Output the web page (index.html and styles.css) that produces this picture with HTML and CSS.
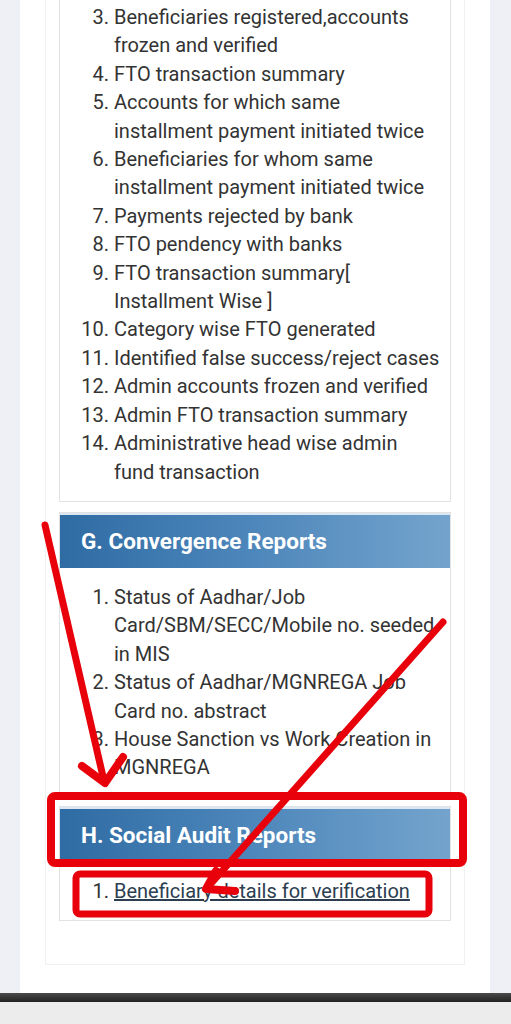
FILE: index.html
```html
<!DOCTYPE html>
<html>
	<head>
		<meta charset="utf-8">
		<meta name="viewport" content="width=device-width, initial-scale=1.0">
		<title>MGNREGA Reports</title>
		<link rel="stylesheet" href="styles.css">
	</head>
	<body>
		<div class="screen">
			<div class="card">
				<div class="panel panel-top">
					<ol class="report-list" start="3">
						<li>Beneficiaries registered,accounts frozen and verified</li>
						<li>FTO transaction summary</li>
						<li>Accounts for which same installment payment initiated twice</li>
						<li>Beneficiaries for whom same installment payment initiated twice</li>
						<li>Payments rejected by bank</li>
						<li>FTO pendency with banks</li>
						<li>FTO transaction summary[ Installment Wise ]</li>
						<li>Category wise FTO generated</li>
						<li>Identified false success/reject cases</li>
						<li>Admin accounts frozen and verified</li>
						<li>Admin FTO transaction summary</li>
						<li>Administrative head wise admin fund transaction</li>
					</ol>
				</div>

				<div class="panel">
					<div class="panel-head">G. Convergence Reports</div>
					<ol class="report-list">
						<li>Status of Aadhar/Job Card/SBM/SECC/Mobile no. seeded in MIS</li>
						<li>Status of Aadhar/MGNREGA Job Card no. abstract</li>
						<li>House Sanction vs Work Creation in MGNREGA</li>
					</ol>
				</div>

				<div class="panel">
					<div class="panel-head">H. Social Audit Reports</div>
					<ol class="report-list">
						<li><a href="#">Beneficiary details for verification</a></li>
					</ol>
				</div>
			</div>
		</div>
		<div class="bottom-bar"></div>
		<div class="bottom-fill"></div>

		<!-- 红色标注 -->
		<svg class="marks" width="511" height="1024" viewBox="0 0 511 1024">
			<g fill="none" stroke="#e8000a" stroke-linecap="round" stroke-linejoin="round">
				<line x1="45" y1="525" x2="104" y2="781" stroke-width="7" />
				<polyline points="82,766 105,783 123,757" stroke-width="8" />
				<line x1="443" y1="622" x2="207" y2="888" stroke-width="7" />
				<polyline points="216,871 206,889 235,891" stroke-width="8" />
				<rect x="51" y="796" width="412" height="67" rx="4" stroke-width="8" />
				<rect x="76" y="874" width="353" height="40" rx="4" stroke-width="7" />
			</g>
		</svg>
	</body>
</html>
```

FILE: styles.css
```css
* {
	padding: 0;
	margin: 0;
	box-sizing: border-box;
}

body {
	position: relative;
	width: 511px;
	height: 1024px;
	overflow: hidden;
	background-color: #eff0f6;
	font-family: Roboto, "Liberation Sans", Arial, sans-serif;
	color: #333;
}

.screen {
	margin: 0 21px 0 20px;
	height: 993px;
	overflow: hidden;
	background-color: #fff;
}

.card {
	margin-left: 25px;
	width: 420px;
	padding: 0 13px 35px 13px;
	border: 1px solid #f1f1f1;
	border-top: none;
}

.panel {
	border: 1px solid #e2e2e2;
	margin-bottom: 8px;
	background-color: #fff;
}

.panel-top {
	border-top: none;
	margin-bottom: 10px;
}

.panel-head {
	height: 55px;
	padding-left: 21px;
	display: flex;
	align-items: center;
	border-top: 2px solid #dbe8f3;
	background: linear-gradient(to right, #2f6ca3 0%, #4a84b9 45%, #74a4cd 100%);
	color: #fff;
	font-size: 22.5px;
	font-weight: 700;
}

.report-list {
	padding: 15px 8px 15px 54px;
	font-size: 20px;
	line-height: 28.4px;
}

.panel-top .report-list {
	padding-top: 3px;
}

.report-list a {
	color: #2c3e50;
	text-decoration: underline;
}

.bottom-bar {
	height: 9px;
	background: linear-gradient(to bottom, #4a4a4a, #222);
}

.bottom-fill {
	height: 22px;
	background-color: #ececec;
}

.marks {
	position: absolute;
	left: 0;
	top: 0;
	pointer-events: none;
}
```
